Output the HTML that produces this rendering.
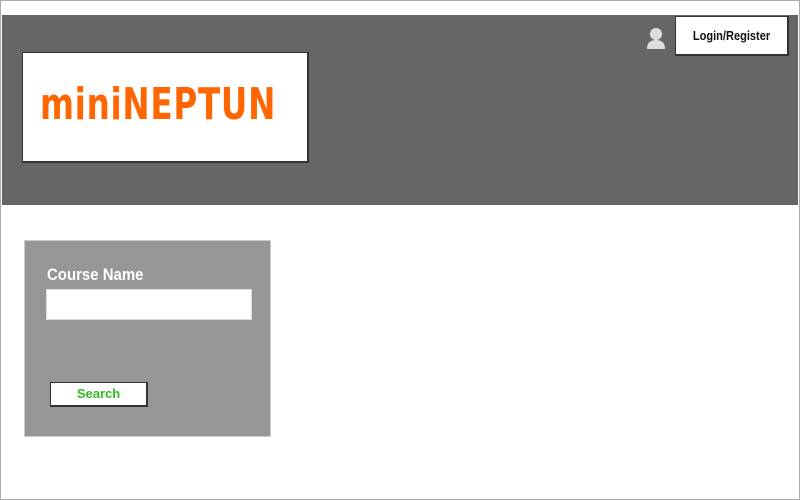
<!DOCTYPE html>
<html><head><style>
body{margin:0;width:800px;height:500px;background:#fff;position:relative;overflow:hidden;font-family:"Liberation Sans",sans-serif}
.frame{position:absolute;left:0;top:0;width:798px;height:498px;border:1px solid #aaa}
.hdr{position:absolute;left:2px;top:15px;width:796px;height:190px;background:#666}
.logo{position:absolute;left:22px;top:52px;width:284px;height:108px;background:#fff;border:1px solid #333;border-right-width:2px;border-bottom-width:2px}
.logo span{position:absolute;left:17px;top:26px;font-size:44px;font-weight:bold;color:#ff6600;letter-spacing:1px;font-family:"DejaVu Sans","Liberation Sans",sans-serif;transform:scaleX(0.74);transform-origin:left}
.login{position:absolute;left:675px;top:16px;width:111px;height:37px;background:#fff;border:1px solid #333;border-right-width:2px;border-bottom-width:2px;text-align:center;line-height:37px;font-size:13px;font-weight:bold;color:#111}
.login span{display:inline-block;transform:scaleX(0.85)}
.panel{position:absolute;left:24px;top:240px;width:247px;height:197px;background:#969696;border:1px solid #ccc;box-sizing:border-box}
.lbl{position:absolute;left:22px;top:24px;font-size:17px;font-weight:bold;color:#fff;transform:scaleX(0.88);transform-origin:left}
.inp{position:absolute;left:21px;top:48px;width:206px;height:31px;background:#fff;border:1px solid #ddd;box-sizing:border-box}
.btn{position:absolute;left:25px;top:141px;width:98px;height:25px;background:#fff;border:1px solid #333;border-right-width:2px;border-bottom-width:2px;box-sizing:border-box;text-align:center;line-height:22px;font-size:13px;font-weight:bold;color:#33bb22}
</style></head><body>
<div class="frame"></div>
<div class="hdr"></div>
<div class="logo"><span>miniNEPTUN</span></div>
<svg style="position:absolute;left:645px;top:26px" width="22" height="24" viewBox="0 0 22 24"><circle cx="11" cy="8" r="6" fill="#ddd"/><path d="M2 23 Q2 14 11 14 Q20 14 20 23Z" fill="#ddd"/></svg>
<div class="login"><span>Login/Register</span></div>
<div class="panel">
<div class="lbl">Course Name</div>
<div class="inp"></div>
<div class="btn">Search</div>
</div>
</body></html>
